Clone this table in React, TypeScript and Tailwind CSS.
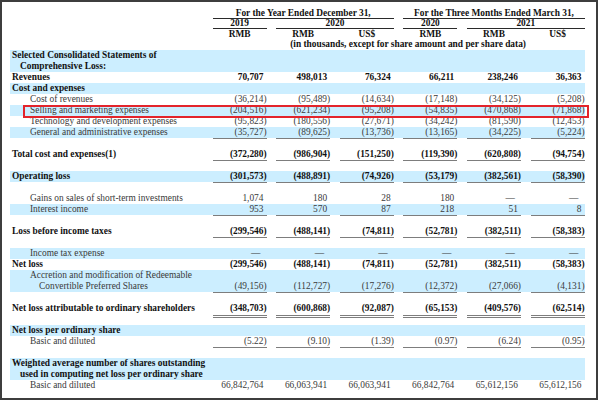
import React from "react";

type Line = "none" | "single" | "double";

interface RowDef {
  label?: string;
  cont?: string;
  kind?: "head" | "sub";
  blue?: boolean;
  values?: string[];
  line?: Line;
  bold?: boolean;
}

const dash = "—";

const rows: RowDef[] = [
  { label: "Selected Consolidated Statements of", cont: "Comprehensive Loss:", kind: "head", blue: true },
  { label: "Revenues", kind: "head", bold: true, values: ["70,707", "498,013", "76,324", "66,211", "238,246", "36,363"] },
  { label: "Cost and expenses", kind: "head", blue: true },
  { label: "Cost of revenues", kind: "sub", values: ["(36,214)", "(95,489)", "(14,634)", "(17,148)", "(34,125)", "(5,208)"] },
  { label: "Selling and marketing expenses", kind: "sub", blue: true, values: ["(204,516)", "(621,234)", "(95,208)", "(54,835)", "(470,868)", "(71,868)"] },
  { label: "Technology and development expenses", kind: "sub", values: ["(95,823)", "(180,556)", "(27,671)", "(34,242)", "(81,590)", "(12,453)"] },
  { label: "General and administrative expenses", kind: "sub", blue: true, line: "single", values: ["(35,727)", "(89,625)", "(13,736)", "(13,165)", "(34,225)", "(5,224)"] },
  {},
  { label: "Total cost and expenses(1)", kind: "head", bold: true, line: "single", values: ["(372,280)", "(986,904)", "(151,250)", "(119,390)", "(620,808)", "(94,754)"] },
  {},
  { label: "Operating loss", kind: "head", bold: true, blue: true, line: "single", values: ["(301,573)", "(488,891)", "(74,926)", "(53,179)", "(382,561)", "(58,390)"] },
  {},
  { label: "Gains on sales of short-term investments", kind: "sub", values: ["1,074", "180", "28", "180", dash, dash] },
  { label: "Interest income", kind: "sub", blue: true, line: "single", values: ["953", "570", "87", "218", "51", "8"] },
  {},
  { label: "Loss before income taxes", kind: "head", bold: true, line: "single", values: ["(299,546)", "(488,141)", "(74,811)", "(52,781)", "(382,511)", "(58,383)"] },
  {},
  { label: "Income tax expense", kind: "sub", blue: true, values: [dash, dash, dash, dash, dash, dash] },
  { label: "Net loss", kind: "head", bold: true, values: ["(299,546)", "(488,141)", "(74,811)", "(52,781)", "(382,511)", "(58,383)"] },
  { label: "Accretion and modification of Redeemable", cont: "Convertible Preferred Shares", kind: "sub", blue: true, line: "single", values: ["(49,156)", "(112,727)", "(17,276)", "(12,372)", "(27,066)", "(4,131)"] },
  {},
  { label: "Net loss attributable to ordinary shareholders", kind: "head", bold: true, line: "double", values: ["(348,703)", "(600,868)", "(92,087)", "(65,153)", "(409,576)", "(62,514)"] },
  {},
  { label: "Net loss per ordinary share", kind: "head", blue: true },
  { label: "Basic and diluted", kind: "sub", line: "single", values: ["(5.22)", "(9.10)", "(1.39)", "(0.97)", "(6.24)", "(0.95)"] },
  {},
  { label: "Weighted average number of shares outstanding", cont: "used in computing net loss per ordinary share", kind: "head", blue: true },
  { label: "Basic and diluted", kind: "sub", values: ["66,842,764", "66,063,941", "66,063,941", "66,842,764", "65,612,156", "65,612,156"] },
];

const grid = "grid grid-cols-[193px_54px_54px_54px_54px_54px_54px] gap-x-[9.6px]";

function Value({ v, line, bold }: { v: string; line?: Line; bold?: boolean }) {
  const isNeg = v.endsWith(")");
  const isDash = v === dash;
  const lineCls =
    line === "single"
      ? "shadow-[0_1px_0_#7d7d7d]"
      : line === "double"
      ? "shadow-[0_1px_0_#fff,0_2px_0_#7d7d7d,0_3px_0_#fff,0_4px_0_#7d7d7d]"
      : "";
  return (
    <div className={`flex justify-end items-end h-full ${lineCls}`}>
      <span className={`${bold ? "font-bold text-[#111]" : "text-[#3a3a3a]"} ${isDash ? "pr-[3px]" : ""}`}>
        {v}
        {!isNeg && <span className="invisible">)</span>}
      </span>
    </div>
  );
}

function Row({ r }: { r: RowDef }) {
  const two = !!r.cont;
  if (!r.label) return <div className="h-[11px]" />;
  const head = r.kind === "head";
  return (
    <div className={`${grid} ${two ? "h-[22px]" : "h-[11px]"} ${r.blue ? "bg-[#cceeff]" : ""}`}>
      <div className={head ? "font-bold text-[#111] pl-[2px]" : "text-[#3a3a3a] pl-[20px]"}>
        <div className="whitespace-nowrap">{r.label}</div>
        {r.cont && (
          <div className={`whitespace-nowrap ${head ? "pl-[8px]" : "pl-[9px]"}`}>{r.cont}</div>
        )}
      </div>
      {r.values
        ? r.values.map((v, i) => <Value key={i} v={v} line={r.line} bold={r.bold} />)
        : null}
    </div>
  );
}

export default function App() {
  return (
    <div className="w-[600px] h-[402px] bg-white">
      <div
        className="relative w-[598px] h-[400px] border-2 border-[#3d3d3d] bg-white text-[9.4px] leading-[11px]"
        style={{ fontFamily: '"Liberation Serif", "Times New Roman", serif' }}
      >
        <div className="ml-[8px] w-[575px] pt-[7px]">
          {/* column headers */}
          <div className={`${grid} font-bold text-[#111] text-center`}>
            <div />
            <div className="col-span-3 h-[10px] leading-[9px] border-b-[1.5px] border-[#2a2a2a] whitespace-nowrap">
              For the Year Ended December 31,
            </div>
            <div className="col-span-3 h-[10px] leading-[9px] border-b-[1.5px] border-[#2a2a2a] whitespace-nowrap">
              For the Three Months Ended March 31,
            </div>

            <div />
            <div className="h-[10px] leading-[9px] border-b-[1.5px] border-[#2a2a2a]">2019</div>
            <div className="col-span-2 h-[10px] leading-[9px] border-b-[1.5px] border-[#2a2a2a]">2020</div>
            <div className="h-[10px] leading-[9px] border-b-[1.5px] border-[#2a2a2a]">2020</div>
            <div className="col-span-2 h-[10px] leading-[9px] border-b-[1.5px] border-[#2a2a2a]">2021</div>

            <div />
            <div className="h-[10px] leading-[10px]">RMB</div>
            <div className="h-[10px] leading-[10px]">RMB</div>
            <div className="h-[10px] leading-[10px]">US$</div>
            <div className="h-[10px] leading-[10px]">RMB</div>
            <div className="h-[10px] leading-[10px]">RMB</div>
            <div className="h-[10px] leading-[10px]">US$</div>

            <div />
            <div />
            <div className="col-span-5 h-[11px] leading-[11px] text-left pl-[14px] whitespace-nowrap">
              (in thousands, except for share amount and per share data)
            </div>
          </div>

          {rows.map((r, i) => (
            <Row key={i} r={r} />
          ))}
        </div>

        {/* highlight box */}
        <div className="absolute left-[21px] top-[103px] w-[566px] h-[13px] border-2 border-[#e3242b]" />
      </div>
    </div>
  );
}
